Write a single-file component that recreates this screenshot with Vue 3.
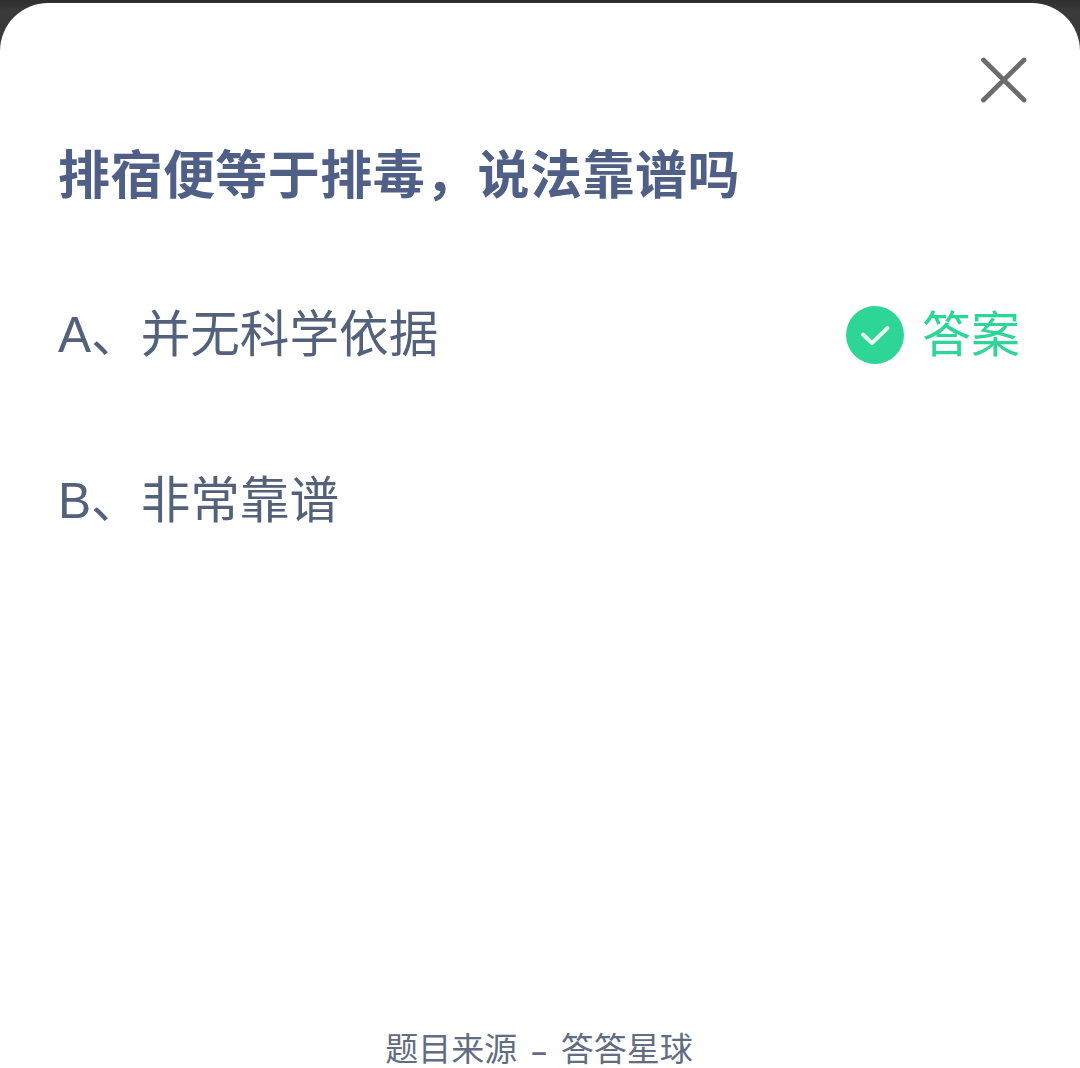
<script setup>
const options = [
  { id: 'a', label: 'A、并无科学依据', correct: true },
  { id: 'b', label: 'B、非常靠谱', correct: false }
]
</script>

<template>
  <div class="screen">
    <div class="card">
      <div class="close-row">
        <svg class="close" width="48" height="48" viewBox="0 0 48 48">
          <path d="M4.5 5 L45 45 M45 5 L4.5 45" stroke="#6c6c6c" stroke-width="4.8" stroke-linecap="round" fill="none" />
        </svg>
      </div>
      <h1 class="title">排宿便等于排毒，说法靠谱吗</h1>
      <div class="options">
        <div v-for="o in options" :key="o.id" class="option">
          <span class="label">{{ o.label }}</span>
          <span v-if="o.correct" class="answer">
            <svg width="58" height="58" viewBox="0 0 58 58">
              <circle cx="29" cy="29" r="29" fill="#2dd596" />
              <path d="M17 28.5 L26 37 L41.5 22" stroke="#e6fbf2" stroke-width="4" stroke-linecap="round" stroke-linejoin="round" fill="none" />
            </svg>
            <span class="answer-text">答案</span>
          </span>
        </div>
      </div>
      <div class="source">题目来源 <span class="dash">–</span> 答答星球</div>
    </div>
  </div>
</template>

<style>
html, body { margin: 0; padding: 0; background: #3a3a3a; }
</style>

<style scoped>
.screen {
  width: 1080px;
  height: 1068px;
  padding-top: 3px;
  box-sizing: border-box;
  overflow: hidden;
  background: linear-gradient(#2e2e2e 0, #3a3a3a 10px);
  font-family: "Liberation Sans", "Noto Sans CJK SC", sans-serif;
}
.card {
  height: 1065px;
  background: #fff;
  border-radius: 48px 48px 0 0;
  box-sizing: border-box;
  padding: 0 60px 0 58px;
  display: flex;
  flex-direction: column;
}
.close-row {
  display: flex;
  justify-content: flex-end;
  padding-top: 52px;
  margin-right: -7px;
}
.title {
  margin: 43px 0 0;
  font-size: 52px;
  line-height: 60px;
  font-weight: 700;
  color: #505f85;
  letter-spacing: 0.45px;
}
.options {
  margin-top: 99px;
  display: flex;
  flex-direction: column;
  gap: 106px;
}
.option {
  display: flex;
  align-items: center;
  justify-content: space-between;
  height: 60px;
}
.label {
  font-size: 49.6px;
  line-height: 60px;
  color: #53617a;
}
.answer {
  display: flex;
  align-items: center;
  gap: 18px;
}
.answer-text {
  font-size: 49px;
  line-height: 60px;
  color: #2dd596;
}
.source {
  margin-top: auto;
  margin-bottom: -6px;
  text-align: center;
  font-size: 33px;
  line-height: 44px;
  color: #626d84;
}
.dash {
  font-size: 27px;
  font-weight: 700;
  margin: 0 5px;
}
</style>
